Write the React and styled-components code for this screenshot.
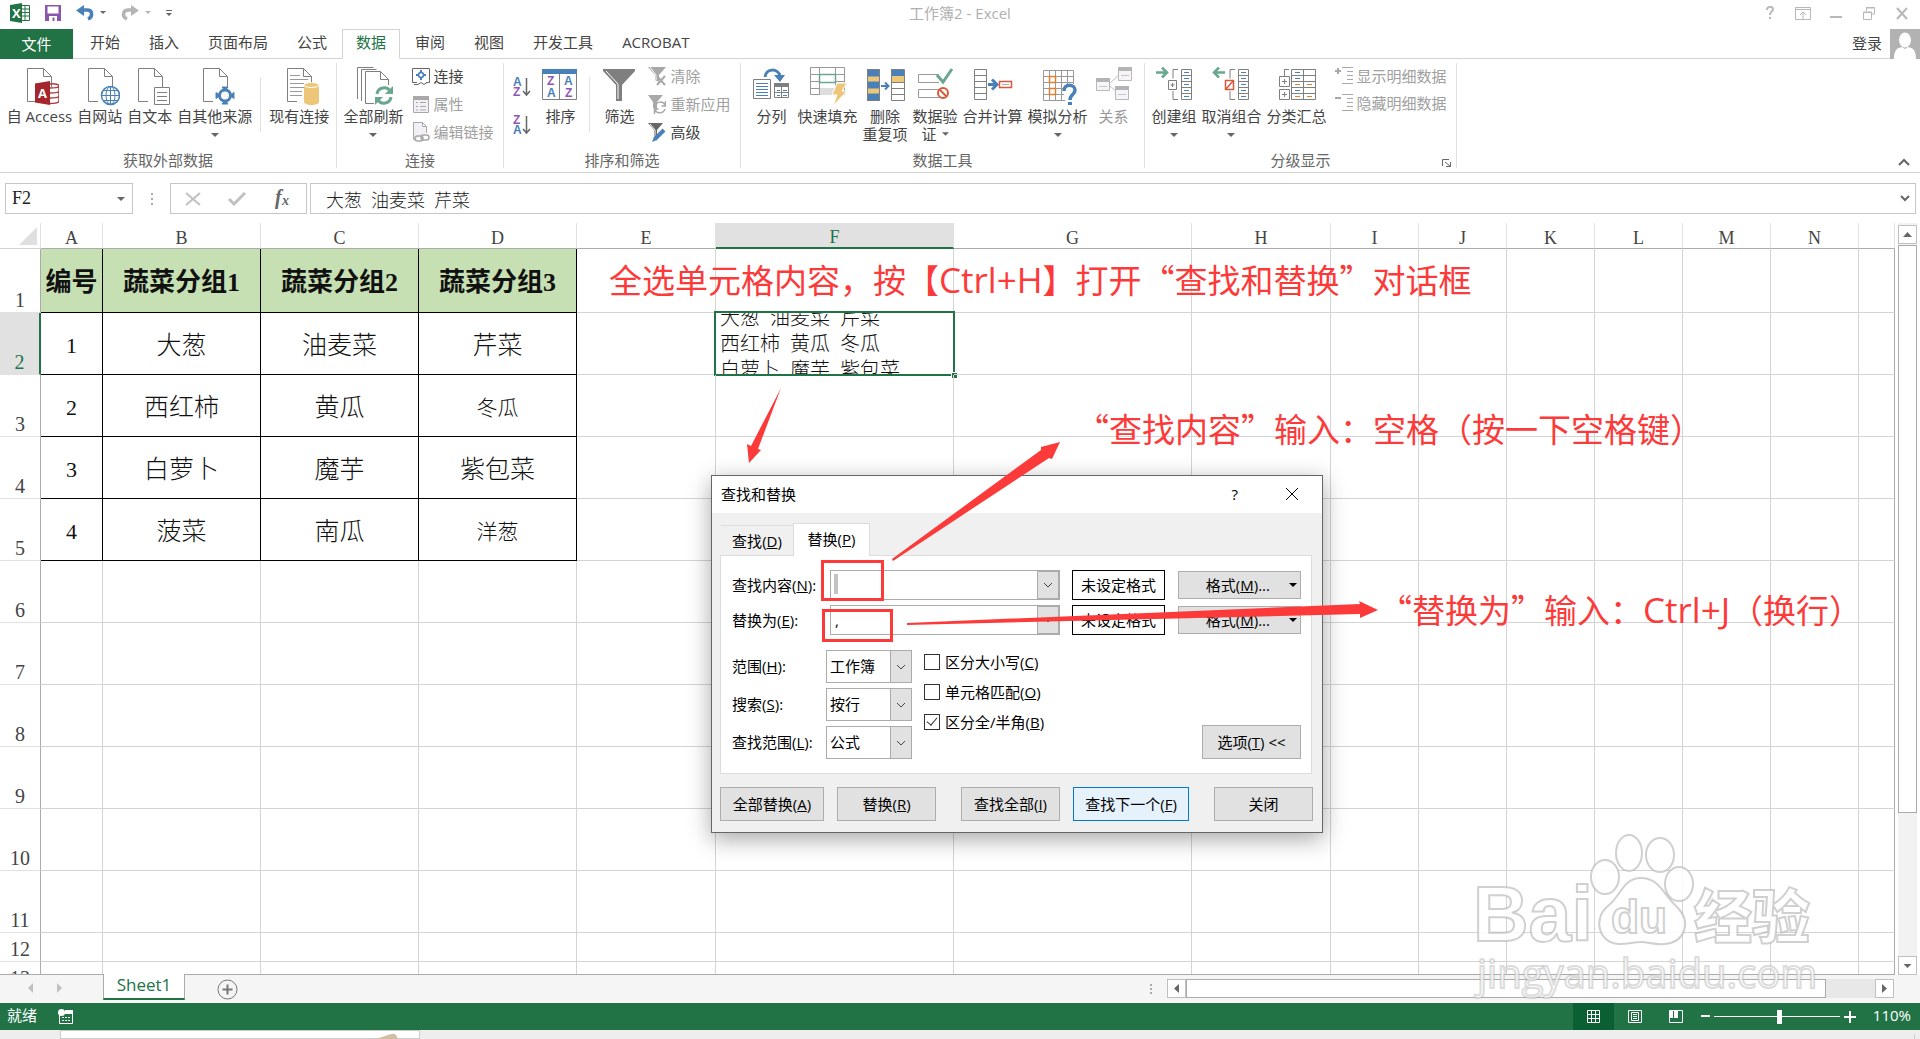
import React from 'react';
import styled, { createGlobalStyle, css } from 'styled-components';

const sans = '"Open Sans", "Noto Sans CJK SC", sans-serif';
const cjk = '"Noto Sans CJK SC", sans-serif';
const serif = '"Liberation Serif", "Noto Sans CJK SC", serif';

const GlobalStyle = createGlobalStyle`
  * {
    box-sizing: border-box;
  }
  body {
    margin: 0;
    overflow: hidden;
    background: white;
    color: #444;
    font: 15px/18px ${sans};
  }
  button, input, select {
    font: inherit;
    color: inherit;
    border-radius: 0;
  }
  button {
    padding: 0;
    border: none;
    background: none;
    white-space: nowrap;
  }
  svg {
    display: block;
    flex: none;
  }
`;

const StyledApp = styled.div`
  position: relative;
  height: 100vh;
  display: flex;
  flex-direction: column;
  overflow: hidden;
`;

const StyledTitleBar = styled.header`
  height: 29px;
  flex: none;
  display: grid;
  grid-template-columns: 1fr auto 1fr;
  align-items: center;
  padding: 0 10px 3px 10px;
  color: #b0b0b0;
`;

const StyledTitle = styled.h1`
  margin: 0;
  font-size: 15px;
  font-weight: 400;
`;

const StyledQuickBar = styled.div`
  display: flex;
  align-items: center;
  gap: 15px;
`;

const StyledWindowButtons = styled.div`
  display: flex;
  justify-content: flex-end;
  gap: 17px;
`;

const StyledTabRow = styled.nav`
  height: 30px;
  flex: none;
  display: flex;
  gap: 1px;
  border-bottom: 1px solid #d4d4d4;
`;

const StyledFileTab = styled.button`
  width: 73px;
  height: 30px;
  margin-right: 2px;
  background: #217346;
  color: white;
`;

const StyledTab = styled.button`
  height: 30px;
  padding: 0 13px 5px;
  border: 1px solid transparent;
  ${({ active }) =>
    active &&
    css`
      background: white;
      border-color: #d4d4d4;
      border-bottom-color: white;
      color: #217346;
    `}
`;

const StyledAccount = styled.div`
  margin-left: auto;
  display: flex;
  align-items: center;
  gap: 8px;
  height: 30px;
`;

const StyledLogin = styled.a`
  padding-bottom: 3px;
  color: inherit;
  text-decoration: none;
`;

const StyledRibbon = styled.section`
  position: relative;
  height: 114px;
  flex: none;
  display: flex;
  padding: 4px 0;
  border-bottom: 1px solid #d4d4d4;
`;

const StyledGroup = styled.div`
  position: relative;
  width: ${({ width }) => width}px;
  height: 105px;
  flex: none;
  border-right: 1px solid #e1e1e1;
`;

const StyledTools = styled.div`
  display: flex;
  justify-content: center;
  gap: 1px;
  height: 88px;
`;

const StyledGroupName = styled.div`
  text-align: center;
  color: #666;
`;

const StyledBigButton = styled.button`
  display: flex;
  flex-direction: column;
  align-items: center;
  min-width: 46px;
  padding: 4px 2px 0;
  opacity: ${({ disabled }) => (disabled ? 0.55 : 1)};
  white-space: pre;
  color: #444;
`;

const StyledSecondLine = styled.span`
  display: flex;
  align-items: center;
  gap: 5px;
`;

const StyledDivider = styled.div`
  width: 1px;
  height: 55px;
  margin: 14px ${({ gap }) => gap}px 0;
  background: #e1e1e1;
`;

const StyledColumn = styled.div`
  display: flex;
  flex-direction: column;
`;

const StyledSmallButton = styled.button`
  display: flex;
  align-items: center;
  gap: 4px;
  height: ${({ $row }) => $row || 28}px;
  padding: 0 5px 2px;
  color: ${({ disabled }) => (disabled ? '#a0a0a0' : '#444')};
`;

const StyledSortButtons = styled.div`
  display: flex;
  flex-direction: column;
  gap: 16px;
  padding: 13px 5px 0;
`;

const StyledLauncher = styled.button`
  position: absolute;
  right: 5px;
  bottom: 1px;
`;

const StyledCollapse = styled.button`
  position: absolute;
  right: 10px;
  bottom: 6px;
`;

const StyledFormulaBar = styled.section`
  height: 50px;
  flex: none;
  display: flex;
  gap: 3px;
  padding: 10px 4px 9px 5px;
`;

const StyledNameBox = styled.div`
  width: 128px;
  display: flex;
  align-items: center;
  border: 1px solid #c6c6c6;
  padding: 0 7px 0 6px;
`;

const StyledBareInput = styled.input`
  flex: 1;
  min-width: 0;
  padding: 0;
  border: none;
  outline: none;
  background: none;
  color: ${({ color }) => color || '#222'};
  font-family: ${({ serifed }) => (serifed ? serif : sans)};
  font-size: ${({ serifed }) => (serifed ? 18 : 15)}px;
  font-weight: ${({ serifed }) => (serifed ? 300 : 400)};
`;

const StyledGrip = styled.div`
  width: 31px;
  display: flex;
  justify-content: center;
  align-items: center;
`;

const StyledFormulaTools = styled.div`
  width: 137px;
  display: flex;
  align-items: center;
  justify-content: space-between;
  padding: 0 16px 0 14px;
  border: 1px solid #c6c6c6;
`;

const StyledFormulaInput = styled.div`
  flex: 1;
  display: flex;
  align-items: center;
  padding: 0 5px 0 15px;
  border: 1px solid #c6c6c6;
`;

const StyledWorkspace = styled.main`
  flex: 1;
  min-height: 0;
  display: flex;
`;

const StyledSheet = styled.div`
  flex: 1;
  min-width: 0;
  overflow: hidden;
  border-bottom: 1px solid #ababab;
`;

const StyledTable = styled.table`
  width: 100%;
  table-layout: fixed;
  border-collapse: separate;
  border-spacing: 0;
  font-family: ${serif};
`;

const StyledColumnHead = styled.th`
  height: 26px;
  padding: 4px 0 0;
  border-right: 1px solid #e1e1e1;
  border-bottom: 1px solid #ababab;
  font-size: 18px;
  line-height: 20px;
  font-weight: 400;
  ${({ $selected }) =>
    $selected &&
    css`
      background: #e1e1e1;
      padding-top: 3px;
      border-bottom: 2px solid #217346;
      color: #217346;
    `}
`;

const StyledCorner = styled.td`
  height: 26px;
  padding: 0 3px 3px;
  border-right: 1px solid #e1e1e1;
  border-bottom: 1px solid #d4d4d4;
  vertical-align: bottom;
  svg {
    margin-left: auto;
  }
`;

const StyledRowHead = styled.th`
  height: ${({ $height }) => $height}px;
  padding: 0 0 2px;
  border-right: 1px solid #ababab;
  border-bottom: 1px solid #e1e1e1;
  vertical-align: bottom;
  font-size: 20px;
  line-height: 20px;
  font-weight: 400;
  ${({ $selected }) =>
    $selected &&
    css`
      background: #e1e1e1;
      border-right: 2px solid #217346;
      color: #217346;
    `}
`;

const StyledCell = styled.td`
  position: relative;
  padding: 4px 0 0;
  border-right: 1px solid #d4d4d4;
  border-bottom: 1px solid #d4d4d4;
  text-align: center;
  color: #111;
  font-size: ${({ $size }) => $size || 25}px;
  font-weight: 300;
  line-height: 26px;
  white-space: nowrap;
  &:last-child {
    border-right-color: #ababab;
  }
  ${({ $data }) =>
    $data &&
    css`
      border-color: black;
    `}
  ${({ $head }) =>
    $head &&
    css`
      background: #c6e0b4;
      font-weight: 700;
    `}
`;

const StyledSelection = styled.div`
  position: absolute;
  inset: -2px;
  border: 2px solid #217346;
  display: flex;
  flex-direction: column;
  justify-content: center;
  overflow: hidden;
  padding-left: 4px;
  font-size: 20px;
  text-align: left;
  white-space: pre;
`;

const StyledFillHandle = styled.span`
  position: absolute;
  right: -4px;
  bottom: -4px;
  width: 6px;
  height: 6px;
  border: solid white;
  border-width: 1px 0 0 1px;
  background: #217346;
`;

const StyledVerticalScroll = styled.div`
  width: 25px;
  display: flex;
  flex-direction: column;
  padding: 2px 3px 0;
  background: linear-gradient(#f2f2f2, #f2f2f2) 3px 0 / 19px 100% no-repeat;
`;

const StyledScrollButton = styled.button`
  width: 19px;
  height: 19px;
  flex: none;
  display: flex;
  align-items: center;
  justify-content: center;
  border: 1px solid #c0c0c0;
  background: white;
`;

const StyledVerticalThumb = styled.div`
  flex: 568 0 0;
  margin-top: 1px;
  border: 1px solid #ababab;
  background: white;
`;

const StyledSpace = styled.div`
  flex: ${({ grow }) => grow} 0 0;
`;

const StyledSheetBar = styled.section`
  height: 28px;
  flex: none;
  display: flex;
  align-items: flex-start;
  background: #f5f5f5;
`;

const StyledSheetArrows = styled.div`
  width: 103px;
  display: flex;
  gap: 24px;
  padding: 8px 0 0 28px;
`;

const StyledSheetTab = styled.button`
  width: 82px;
  height: 26px;
  margin-top: -1px;
  padding-bottom: 3px;
  z-index: 1;
  border: 1px solid #ababab;
  border-top: none;
  border-bottom: 2px solid #217346;
  background: white;
  color: #217346;
  font-size: 17px;
`;

const StyledAddSheet = styled.button`
  margin: 4px 0 0 32px;
`;

const StyledHorizontalScroll = styled.div`
  width: 744px;
  display: flex;
  align-items: center;
  margin: 4px 26px 0 auto;
`;

const StyledTrack = styled.div`
  flex: 1;
  display: flex;
  height: 19px;
  background: #e8e8e8;
`;

const StyledHorizontalThumb = styled.div`
  width: 640px;
  border: 1px solid #ababab;
  background: white;
`;

const StyledStatusBar = styled.footer`
  height: 27px;
  flex: none;
  display: flex;
  align-items: center;
  padding: 0 9px 0 7px;
  background: #217346;
  color: white;
`;

const StyledStatusText = styled.span`
  padding-bottom: 3px;
`;

const StyledViewButton = styled.button`
  width: 41px;
  height: 27px;
  display: flex;
  align-items: center;
  justify-content: center;
  background: ${({ active }) => (active ? '#0b6033' : 'none')};
`;

const StyledStatusIcon = styled.div`
  margin: 0 auto 0 21px;
`;

const StyledZoomRange = styled.input`
  appearance: none;
  width: 126px;
  height: 14px;
  margin: 0 4px;
  background: linear-gradient(white, white) center / 100% 1px no-repeat;
  &::-webkit-slider-thumb {
    appearance: none;
    width: 5px;
    height: 14px;
    background: white;
  }
`;

const StyledZoomValue = styled.span`
  margin-left: 14px;
  padding-bottom: 3px;
  width: 41px;
  text-align: right;
`;

const StyledTaskbar = styled.div`
  height: 9px;
  flex: none;
  display: flex;
  justify-content: space-between;
  overflow: hidden;
  background: #eee;
`;

const StyledTaskSearch = styled.div`
  width: 360px;
  margin-left: 60px;
  border: 1px solid #ccc;
  background: white;
  svg {
    margin: 2px 0 0 312px;
  }
`;

const StyledClock = styled.div`
  margin: 4px 5px 0 0;
  padding-right: 89px;
  border-right: 1px solid #ccc;
  color: black;
`;

const StyledDialog = styled.section`
  position: absolute;
  left: 711px;
  top: 475px;
  width: 612px;
  border: 1px solid #666;
  background: #f0f0f0;
  box-shadow: 0 6px 22px rgba(0, 0, 0, 0.35);
  color: black;
`;

const StyledDialogTitle = styled.div`
  height: 37px;
  display: flex;
  align-items: center;
  padding: 0 23px 2px 9px;
  background: white;
  h2 {
    margin: 0 auto 0 0;
    font-size: 15px;
    font-weight: 400;
  }
  button + button {
    margin-left: 47px;
  }
`;

const StyledDialogBody = styled.div`
  padding: 10px 8px 11px;
`;

const StyledDialogTabs = styled.div`
  display: flex;
  align-items: flex-end;
  padding-left: 1px;
`;

const StyledDialogTab = styled.button`
  position: relative;
  width: ${({ active }) => (active ? 77 : 72)}px;
  height: ${({ active }) => (active ? 33 : 30)}px;
  border-top: 1px solid #dcdcdc;
  ${({ active }) =>
    active &&
    css`
      margin-bottom: -1px;
      padding-bottom: 2px;
      border: 1px solid #dcdcdc;
      border-bottom: none;
      background: white;
    `}
`;

const StyledPanel = styled.div`
  display: flex;
  flex-direction: column;
  gap: 5px;
  margin-right: 2px;
  padding: 14px 10px 14px 11px;
  border: 1px solid #dcdcdc;
  background: white;
`;

const StyledFindRow = styled.div`
  display: flex;
  align-items: center;
  label {
    width: 98px;
    white-space: nowrap;
  }
`;

const StyledCombo = styled.div`
  flex: 1;
  height: 30px;
  display: flex;
  padding-left: 4px;
  border: 1px solid #ababab;
`;

const StyledDropButton = styled.button`
  width: 22px;
  display: flex;
  align-items: center;
  justify-content: center;
  border: 1px solid #ababab;
  background: #e1e1e1;
`;

const StyledFormatPreview = styled.div`
  width: 93px;
  height: 30px;
  margin: 0 13px 0 12px;
  border: 1px solid black;
  line-height: 28px;
  text-align: center;
`;

const StyledButton = styled.button`
  width: ${({ width }) => width || 99}px;
  height: ${({ height }) => height || 34}px;
  border: 1px solid ${({ primary }) => (primary ? '#0078d7' : '#adadad')};
  background: ${({ primary }) => (primary ? '#e5f1fb' : '#e1e1e1')};
`;

const StyledFormatButton = styled(StyledButton)`
  display: flex;
  align-items: center;
  justify-content: flex-end;
  gap: 19px;
  padding-right: 3px;
`;

const StyledOptions = styled.div`
  display: flex;
  align-items: flex-start;
  gap: 12px;
  margin-top: 10px;
`;

const StyledSelectRow = styled.div`
  display: flex;
  align-items: center;
  margin-bottom: 5px;
  &:last-child {
    margin-bottom: 0;
  }
  label {
    width: 94px;
    padding-bottom: 2px;
    white-space: nowrap;
  }
`;

const StyledSelectBox = styled.div`
  position: relative;
  display: flex;
`;

const StyledSelect = styled.select`
  appearance: none;
  width: 86px;
  height: 33px;
  padding: 0 22px 2px 3px;
  border: 1px solid #ababab;
  background: white;
`;

const StyledSelectArrow = styled.span`
  position: absolute;
  right: 0;
  top: 0;
  bottom: 0;
  width: 22px;
  display: flex;
  align-items: center;
  justify-content: center;
  border: 1px solid #ababab;
  background: #e1e1e1;
  pointer-events: none;
`;

const StyledCheckList = styled.div`
  display: flex;
  flex-direction: column;
  gap: 12px;
  padding-top: 3px;
`;

const StyledCheckLabel = styled.label`
  display: flex;
  align-items: center;
  gap: 5px;
`;

const StyledCheckbox = styled.input`
  appearance: none;
  width: 16px;
  height: 16px;
  margin: 0;
  border: 1px solid #333;
  background: white;
  &:checked::after {
    content: '';
    display: block;
    width: 5px;
    height: 9px;
    margin: 0 0 0 4px;
    border: solid #333;
    border-width: 0 1px 1px 0;
    transform: rotate(40deg);
  }
`;

const StyledMore = styled.div`
  margin-left: auto;
  align-self: flex-end;
`;

const StyledDialogFooter = styled.div`
  display: flex;
  gap: 25px;
  margin-top: 13px;
  div {
    display: flex;
    gap: 13px;
  }
`;

const StyledCaret = styled.span`
  width: 4px;
  height: 20px;
  margin: 3px 0 0 -1px;
  background: #c4c4c4;
`;

const StyledNotes = styled.div`
  position: absolute;
  inset: 0;
  pointer-events: none;
  color: #fc3a3a;
`;

const StyledNote = styled.p`
  position: absolute;
  left: ${({ $left }) => $left}px;
  top: ${({ $top }) => $top}px;
  margin: 0;
  font: 33px/50px ${cjk};
  white-space: nowrap;
  span {
    font-family: 'Open Sans', sans-serif;
    font-size: 35px;
  }
`;

const StyledWatermark = styled.svg`
  position: absolute;
  right: 90px;
  bottom: 29px;
`;

const blue = '#4a80b8';
const grey = '#7f7f7f';
const green = '#6aa78f';
const yellow = '#eec67a';
const red = '#d9593d';

const Big = ({ children }) => (
  <svg width="40" height="40" viewBox="0 0 40 40" fill="none" stroke={grey}>
    {children}
  </svg>
);

const Small = ({ children }) => (
  <svg width="18" height="20" viewBox="0 0 18 20" fill="none" stroke="#a8a8a8">
    {children}
  </svg>
);

const Arrow = ({ color = '#666', size = 7 }) => (
  <svg width={size} height="4" viewBox="0 0 8 4">
    <path d="M0 0h8L4 4z" fill={color} />
  </svg>
);

const Chevron = () => (
  <svg width="10" height="6" viewBox="0 0 10 6" fill="none" stroke="#444">
    <path d="M1 1l4 4 4-4" />
  </svg>
);

const Page = () => <path d="M18 34.5H8.5v-33h16l8 8V20M24.5 1.5v8h8" />;

const icons = {
  access: (
    <Big>
      <Page />
      <path d="M16 16.5L31 14v24l-15-2.500z" fill="#a4262c" stroke="none" />
      <g stroke="#b5383c" strokeWidth="1.500">
        <path d="M31 17c6-.5 9 .5 9 2s-4 2-9 2M40 19v15c0 2-4 2.500-9 2.500M31 26c5 0 9-.5 9-2M31 31c5 0 9-.5 9-2" />
      </g>
      <text x="19" y="31" fontSize="13" fontWeight="700" fill="white" stroke="none">A</text>
    </Big>
  ),
  web: (
    <Big>
      <Page />
      <circle cx="30.500" cy="28.500" r="9" fill="white" stroke={blue} strokeWidth="1.500" />
      <path d="M21.500 28.500h18M30.500 19.500v18M23 23.500h15M23 33.500h15" stroke={blue} />
      <ellipse cx="30.500" cy="28.500" rx="4.500" ry="9" stroke={blue} />
    </Big>
  ),
  text: (
    <Big>
      <Page />
      <path d="M24.500 20.500h15v17h-15z" fill="white" />
      <path d="M27 25.500h10M27 29.500h10M27 33.500h10" />
    </Big>
  ),
  other: (
    <Big>
      <Page />
      <circle cx="30" cy="28.500" r="5.500" fill="white" stroke={blue} strokeWidth="3" />
      <path d="M27 20h6l-3 4zM27 37h6l-3-4zM21 25.500v6l4-3zM39 25.500v6l-4-3z" fill={blue} stroke={blue} />
    </Big>
  ),
  existing: (
    <Big>
      <Page />
      <path d="M11 8.500h10M11 12.500h18M11 16.500h14M11 20.500h14M11 24.500h12M11 28.500h12" stroke="#999" />
      <path d="M25 18v17c0 4 15 4 15 0V18z" fill={yellow} stroke="none" />
      <ellipse cx="32.500" cy="18" rx="7.500" ry="2.500" fill={yellow} stroke="white" />
    </Big>
  ),
  refresh: (
    <Big>
      <path d="M4.500 32V.5h16M8.500 34V2.500h15M21 36.500h-8.500v-32h15l8 8V18M27.500 4.500v8h8" />
      <g stroke={green} strokeWidth="3">
        <path d="M24 27c1-7 10-8 13-3M38 30c-1 7-10 8-13 3" />
      </g>
      <path d="M40 19v8h-8zM22 38v-8h8z" fill={green} stroke="none" />
    </Big>
  ),
  sort: (
    <Big>
      <path d="M2.500 2.500h34v30h-34zM19.500 6v26" />
      <path d="M2 2h35v5H2z" fill={blue} stroke="none" />
      <g fontSize="12" fontWeight="600" stroke="none" fontFamily="Liberation Sans">
        <text x="7" y="18" fill="#9055b5">Z</text>
        <text x="7" y="30" fill={blue}>A</text>
        <text x="24" y="18" fill={blue}>A</text>
        <text x="25" y="30" fill="#9055b5">Z</text>
      </g>
    </Big>
  ),
  filter: (
    <Big>
      <path d="M4 2h32v2L23 18v16h-6V18L4 4z" fill={grey} stroke="none" />
      <path d="M7 4l12 13v15" stroke="white" />
    </Big>
  ),
  split: (
    <Big>
      <path d="M2.500 12.500h17v19h-17zM23.500 16.500h14v14h-14zM30.500 20v11M24 25.500h13" />
      <path d="M23 16h15v4H23z" fill={grey} stroke="none" />
      <path d="M5 16.500h12M5 19.500h12M5 22.500h12M5 25.500h12M5 28.500h12M26 23.500h3M32 23.500h4M26 28.500h3M32 28.500h4" stroke={blue} />
      <path d="M14 10c1-9 13-9 15-1" stroke={blue} strokeWidth="3" />
      <path d="M23 8h11l-5 7z" fill={blue} stroke="none" />
    </Big>
  ),
  flash: (
    <Big>
      <path d="M3.500.5h34v27h-34zM3.500 7.500h34M3.500 14.500h34M3.500 21.500h34M12.500.5v27M28.500.5v27" stroke="#999" />
      <path d="M13 21h15v7H13z" fill="#ddd" stroke="none" />
      <path d="M12.500 7.500h16v8h-16z" fill="white" stroke={green} strokeWidth="1.500" />
      <path d="M30 16h10l-5 8h5L26 39l4-11h-5z" fill={yellow} stroke="white" />
    </Big>
  ),
  duplicates: (
    <Big>
      <path d="M2 2h13v32H2z" fill={blue} stroke="none" />
      <path d="M3 9.500h11v5H3zM3 21.500h11v5H3z" fill={yellow} stroke="none" />
      <path d="M2.500 2.500h12v31h-12z" />
      <path d="M26 2h13v7H26z" fill={blue} stroke="none" />
      <path d="M26 9h13v6H26z" fill={yellow} stroke="none" />
      <path d="M26.500 2.500h13v31h-13zM26.500 15.500h13M26.500 21.500h13M26.500 27.500h13" />
      <path d="M16 19h7M20 15.500l3.500 3.500-3.500 3.500" stroke={blue} strokeWidth="2" />
    </Big>
  ),
  validate: (
    <Big>
      <path d="M24 15.500H3.500v-8H24M24 30.500H3.500v-8H24" stroke="#999" />
      <path d="M22 8l6 7L37 2" stroke={green} strokeWidth="3" />
      <circle cx="28" cy="26" r="5" stroke={red} strokeWidth="2" fill="white" />
      <path d="M24.500 22.500l7 7" stroke={red} strokeWidth="2" />
    </Big>
  ),
  merge: (
    <Big>
      <path d="M1.500 2.500h12v30h-12zM1.500 8.500h12M1.500 14.500h12M1.500 20.500h12M1.500 26.500h12" />
      <path d="M15 17.500h8M19 12.500l5 5-5 5" stroke={blue} strokeWidth="3" />
      <path d="M26.500 14.500h12v6h-12z" stroke={red} strokeWidth="1.500" />
      <path d="M29 17.500h7" stroke="#aaa" />
    </Big>
  ),
  whatif: (
    <Big>
      <path d="M5.500 3.500h30v30h-30zM11.500 4v29M17.500 4v29M23.500 4v29M29.500 4v29M6 9.500h29M6 15.500h29M6 21.500h29M6 27.500h29" stroke="#999" />
      <path d="M11.500 9.500h6v6h-6zM11.500 21.500h6v6h-6z" fill="white" stroke="#e08030" strokeWidth="1.500" />
      <path d="M24 17h14v20H28z" fill="white" stroke="none" />
      <path d="M26 24c0-8 11-7 11-1 0 5-5 4-5 10" stroke={blue} strokeWidth="3.500" />
      <path d="M30 35h4v3h-4z" fill={blue} stroke="none" />
    </Big>
  ),
  relations: (
    <Big>
      <path d="M15 17l12-11M15 18l9 8" stroke="#888" />
      <path d="M2.500 11.500h13v12h-13zM24.500 .5h13v13h-13zM21.500 20.500h13v12h-13z" fill="#f0ecf4" />
      <path d="M2 11h14v4H2zM24 0h14v4H24zM21 19h14v4H21z" fill="#777" stroke="none" />
      <path d="M5 19.500h8M27 8.500h8M24 27.500h8" stroke="#999" />
    </Big>
  ),
  group: (
    <Big>
      <path d="M27.500 2.500h10v30h-10zM27.500 8.500h10M27.500 14.500h10M27.500 20.500h10M27.500 26.500h10M24 2.500h-5v9M19 24v8.500h5M14.500 13.500h8v9h-8zM16.500 18h4M18.500 16v4" />
      <path d="M30 5.500h5M30 11.500h5M30 17.500h5M30 23.500h5M30 29.500h5" stroke={blue} />
      <path d="M2 5.500h10M8 .5l5 5-5 5" stroke={green} strokeWidth="2.500" />
    </Big>
  ),
  ungroup: (
    <Big>
      <path d="M27.500 2.500h10v30h-10zM27.500 8.500h10M27.500 14.500h10M27.500 20.500h10M27.500 26.500h10M24 2.500h-5v9M19 24v8.500h5" />
      <path d="M30 5.500h5M30 11.500h5M30 17.500h5M30 23.500h5M30 29.500h5" stroke={blue} />
      <path d="M14.500 13.500h8v9h-8zM15 22l7-8" stroke={red} strokeWidth="1.500" />
      <path d="M4 5.500h10M8 .5l-5 5 5 5" stroke={green} strokeWidth="2.500" />
    </Big>
  ),
  subtotal: (
    <Big>
      <path d="M14.500 2.500h24v30h-24zM14.500 8.500h24M14.500 14.500h24M14.500 20.500h24M14.500 26.500h24M26.500 3v29M12 2.500H7.500v7" />
      <path d="M2.500 9.500h10v10h-10zM2.500 22.500h10v10h-10zM5 14.500h5M7.500 12v5M5 27.500h5M7.500 25v5" />
      <path d="M18 5.500h5M18 11.500h5M18 23.500h5" stroke={blue} />
      <path d="M18 17.500h5M30 17.500h5M18 29.500h5M30 29.500h5" stroke="#e08030" />
    </Big>
  ),
  connection: (
    <Small>
      <path d="M5 16.500H.5v-14h17v14H14M2 18.500h4l3-2 3 2 3-2" stroke="#666" />
      <circle cx="9" cy="9" r="2.500" stroke={blue} strokeWidth="1.500" />
      <path d="M9 4v2M9 12v2M4 9h2M12 9h2" stroke={blue} strokeWidth="2" />
    </Small>
  ),
  properties: (
    <Small>
      <path d="M1.500 2.500h15v16h-15zM8 8.500h6M8 12.500h6M8 16h6M4 8.500h2M4 12.500h2M4 16h2" fill="#f3f0f5" />
      <path d="M1 2h16v4H1z" fill="#a8a8a8" stroke="none" />
    </Small>
  ),
  editLinks: (
    <Small>
      <path d="M4 17.500H1.500v-17h9l4 4V11M10.500.5v4h4" fill="#f3f0f5" />
      <rect x="3" y="14" width="8" height="5" rx="2.500" strokeWidth="1.500" />
      <rect x="9" y="13" width="8" height="5" rx="2.500" strokeWidth="1.500" />
    </Small>
  ),
  clear: (
    <Small>
      <path d="M0 1h18l-7 8v7l-4-2V9z" fill="#a8a8a8" stroke="none" />
      <path d="M2 1l6 8v5" stroke="white" />
      <path d="M9 10l8 9M17 10l-8 9" strokeWidth="2" />
    </Small>
  ),
  reapply: (
    <Small>
      <path d="M0 1h15l-6 7v8l-4-2V8z" fill="#a8a8a8" stroke="none" />
      <path d="M7 12c2-5 8-5 10-1M17 15c-2 5-8 5-10 1M17.500 7v5h-4M6.500 20v-5h4" strokeWidth="1.500" />
    </Small>
  ),
  advanced: (
    <Small>
      <path d="M0 1h15L9 8v8l-3-2V8z" fill="#666" stroke="none" />
      <path d="M2 2l5 6v6" stroke="white" />
      <path d="M7 17L16 8" stroke={blue} strokeWidth="4" />
      <path d="M4 20l2-5 3 3z" fill={blue} stroke="none" />
    </Small>
  ),
  showDetail: (
    <Small>
      <path d="M0 5h6M3 2v6" strokeWidth="2" />
      <path d="M7 1.500h11M12 5.500h6M12 9.500h6M12 13.500h6M7 17.500h11" />
    </Small>
  ),
  hideDetail: (
    <Small>
      <path d="M0 5h6" strokeWidth="2" />
      <path d="M7 1.500h11M12 5.500h6M12 9.500h6M12 13.500h6M7 17.500h11" />
    </Small>
  ),
};

const SortIcon = ({ top, bottom }) => (
  <svg width="18" height="22" viewBox="0 0 18 22">
    <g fontSize="12" fontWeight="700" fontFamily="Liberation Sans">
      <text x="0" y="10" fill={top === 'A' ? blue : '#9055b5'}>{top}</text>
      <text x="0" y="20" fill={bottom === 'A' ? blue : '#9055b5'}>{bottom}</text>
    </g>
    <path d="M13.500 2v17M10 15l3.500 4 3.500-4" fill="none" stroke="#666" strokeWidth="1.500" />
  </svg>
);

const BigButton = ({ icon, label, second, drop, disabled }) => (
  <StyledBigButton type="button" disabled={disabled}>
    {icons[icon]}
    <span>{label}</span>
    {second && (
      <StyledSecondLine>
        {second}
        {drop && <Arrow />}
      </StyledSecondLine>
    )}
    {drop && !second && (
      <svg width="8" height="18" viewBox="0 0 8 18">
        <path d="M0 8h8l-4 4z" fill="#666" />
      </svg>
    )}
  </StyledBigButton>
);

const SmallButton = ({ icon, label, disabled, row }) => (
  <StyledSmallButton type="button" disabled={disabled} $row={row}>
    {icons[icon]}
    {label}
  </StyledSmallButton>
);

const Ribbon = () => (
  <StyledRibbon>
    <StyledGroup width={337}>
      <StyledTools>
        <BigButton icon="access" label="自 Access" />
        <BigButton icon="web" label="自网站" />
        <BigButton icon="text" label="自文本" />
        <BigButton icon="other" label="自其他来源" drop />
        <StyledDivider gap={5} />
        <BigButton icon="existing" label="现有连接" />
      </StyledTools>
      <StyledGroupName>获取外部数据</StyledGroupName>
    </StyledGroup>
    <StyledGroup width={167}>
      <StyledTools>
        <BigButton icon="refresh" label="全部刷新" drop />
        <StyledColumn>
          <SmallButton icon="connection" label="连接" />
          <SmallButton icon="properties" label="属性" disabled />
          <SmallButton icon="editLinks" label="编辑链接" disabled />
        </StyledColumn>
      </StyledTools>
      <StyledGroupName>连接</StyledGroupName>
    </StyledGroup>
    <StyledGroup width={237}>
      <StyledTools>
        <StyledSortButtons>
          <button type="button" aria-label="升序">
            <SortIcon top="A" bottom="Z" />
          </button>
          <button type="button" aria-label="降序">
            <SortIcon top="Z" bottom="A" />
          </button>
        </StyledSortButtons>
        <BigButton icon="sort" label="排序" />
        <StyledDivider gap={5} />
        <BigButton icon="filter" label="筛选" />
        <StyledColumn>
          <SmallButton icon="clear" label="清除" disabled />
          <SmallButton icon="reapply" label="重新应用" disabled />
          <SmallButton icon="advanced" label="高级" />
        </StyledColumn>
      </StyledTools>
      <StyledGroupName>排序和筛选</StyledGroupName>
    </StyledGroup>
    <StyledGroup width={404}>
      <StyledTools>
        <BigButton icon="split" label="分列" />
        <BigButton icon="flash" label="快速填充" />
        <BigButton icon="duplicates" label="删除" second="重复项" />
        <BigButton icon="validate" label="数据验" second="证" drop />
        <BigButton icon="merge" label="合并计算" />
        <BigButton icon="whatif" label="模拟分析" drop />
        <BigButton icon="relations" label="关系" disabled />
      </StyledTools>
      <StyledGroupName>数据工具</StyledGroupName>
    </StyledGroup>
    <StyledGroup width={312}>
      <StyledTools>
        <BigButton icon="group" label="创建组" drop />
        <BigButton icon="ungroup" label="取消组合" drop />
        <BigButton icon="subtotal" label="分类汇总" />
        <StyledColumn>
          <SmallButton icon="showDetail" label="显示明细数据" row={27} disabled />
          <SmallButton icon="hideDetail" label="隐藏明细数据" row={27} disabled />
        </StyledColumn>
      </StyledTools>
      <StyledGroupName>分级显示</StyledGroupName>
      <StyledLauncher type="button" aria-label="分级显示设置">
        <svg width="9" height="8" viewBox="0 0 9 8" fill="none" stroke="#666">
          <path d="M.5 7V.5H7M3 3l5 4M8.500 3v4.500H4" />
        </svg>
      </StyledLauncher>
    </StyledGroup>
    <StyledCollapse type="button" aria-label="折叠功能区">
      <svg width="12" height="8" viewBox="0 0 12 8" fill="none" stroke="#666" strokeWidth="2">
        <path d="M1 7l5-5 5 5" />
      </svg>
    </StyledCollapse>
  </StyledRibbon>
);

const tabs = ['开始', '插入', '页面布局', '公式', '数据', '审阅', '视图', '开发工具', 'ACROBAT'];

const TitleBar = () => (
  <StyledTitleBar>
    <StyledQuickBar>
      <svg width="20" height="20" viewBox="0 0 20 20">
        <path d="M11 2.500h8.500v15H11M11 6h8M11 9.500h8M11 13h8M15 3v14" fill="none" stroke="#217346" />
        <path d="M0 2l12-2v20L0 18z" fill="#217346" />
        <text x="2" y="15" fontSize="13" fontWeight="700" fill="white">X</text>
      </svg>
      <button type="button" aria-label="保存">
        <svg width="16" height="16" viewBox="0 0 16 16">
          <path d="M0 0h16v16H0z" fill="#8a55ad" />
          <path d="M2.500 1.500h11v7h-11zM4 11h8v5H9.500v-3.500h-2V16H4z" fill="white" />
        </svg>
      </button>
      <button type="button" aria-label="撤消">
        <svg width="30" height="16" viewBox="0 0 30 16">
          <path d="M4 5h7c6 0 6 7 1 9" fill="none" stroke="#4a80b8" strokeWidth="3.500" />
          <path d="M8 0v11L0 5.500z" fill="#4a80b8" />
          <path d="M24 6h6l-3 3z" fill="#666" />
        </svg>
      </button>
      <button type="button" aria-label="恢复">
        <svg width="30" height="16" viewBox="0 0 30 16">
          <path d="M14 5H8c-7 0-7 7-2 9" fill="none" stroke="#b5b5b5" strokeWidth="3.500" />
          <path d="M10 0v11l8-5.500z" fill="#b5b5b5" />
          <path d="M24 6h6l-3 3z" fill="#b5b5b5" />
        </svg>
      </button>
      <button type="button" aria-label="自定义快速访问工具栏">
        <svg width="6" height="8" viewBox="0 0 6 8">
          <path d="M0 1h6v1H0zM0 4h6L3 7z" fill="#666" />
        </svg>
      </button>
    </StyledQuickBar>
    <StyledTitle>工作簿2 - Excel</StyledTitle>
    <StyledWindowButtons>
      <button type="button" aria-label="帮助">
        <svg width="16" height="14" viewBox="0 0 16 14" fill="none" stroke="#b8b8b8" strokeWidth="2">
          <path d="M5 4c0-4 6-4 6-1 0 3-3 2-3 6M8 11v2" />
        </svg>
      </button>
      <button type="button" aria-label="功能区显示选项">
        <svg width="16" height="14" viewBox="0 0 16 14" fill="none" stroke="#b8b8b8">
          <path d="M.5 1.500h15v12H.5zM0 3.500h16M8 13V6M5 9l3-3 3 3" />
        </svg>
      </button>
      <button type="button" aria-label="最小化">
        <svg width="16" height="14" viewBox="0 0 16 14">
          <path d="M2 10h12v2H2z" fill="#b8b8b8" />
        </svg>
      </button>
      <button type="button" aria-label="还原">
        <svg width="16" height="14" viewBox="0 0 16 14" fill="none" stroke="#b8b8b8">
          <path d="M2.500 6.500h8v7h-8zM2 6h9M5.500 5V1.500h8V8H11M5 2h9" />
        </svg>
      </button>
      <button type="button" aria-label="关闭">
        <svg width="16" height="14" viewBox="0 0 16 14" fill="none" stroke="#b8b8b8" strokeWidth="2">
          <path d="M3 2l10 11M13 2L3 13" />
        </svg>
      </button>
    </StyledWindowButtons>
  </StyledTitleBar>
);

const rows = [
  ['编号', '蔬菜分组1', '蔬菜分组2', '蔬菜分组3'],
  ['1', '大葱', '油麦菜', '芹菜'],
  ['2', '西红柿', '黄瓜', '冬瓜'],
  ['3', '白萝卜', '魔芋', '紫包菜'],
  ['4', '菠菜', '南瓜', '洋葱'],
];
const columns = 'ABCDEFGHIJKLMN'.split('');
const widths = [41, 62, 158, 158, 158, 139, 238, 238, 139, 88, 88, 88, 88, 88, 88];

const rowHeight = n => {
  if (n === 1) return 64;
  return n > 11 ? 29 : 62;
};

const cellSize = (row, col, value) => {
  if (row === 0) return 26;
  if (col === 0) return 22;
  return value === '冬瓜' || value === '洋葱' ? 21 : 25;
};

const Sheet = () => (
  <StyledSheet>
    <StyledTable>
      <colgroup>
        {widths.map((w, i) => (
          <col key={i} width={w} />
        ))}
        <col />
      </colgroup>
      <thead>
        <tr>
          <StyledCorner>
            <svg width="18" height="18" viewBox="0 0 18 18">
              <path d="M18 0v18H0z" fill="#dfdfdf" />
            </svg>
          </StyledCorner>
          {columns.map(c => (
            <StyledColumnHead key={c} $selected={c === 'F'}>
              {c}
            </StyledColumnHead>
          ))}
          <StyledColumnHead />
        </tr>
      </thead>
      <tbody>
        {Array.from({ length: 13 }, (_, r) => (
          <tr key={r}>
            <StyledRowHead $height={rowHeight(r + 1)} $selected={r === 1}>
              {r + 1}
            </StyledRowHead>
            {[...columns, ''].map((c, i) => {
              const value = rows[r] && rows[r][i];
              return (
                <StyledCell
                  key={c}
                  $data={Boolean(value)}
                  $head={Boolean(value) && r === 0}
                  $size={cellSize(r, i, value)}
                >
                  {value}
                  {c === 'F' && r === 1 && (
                    <>
                      <StyledSelection>
                        {['大葱 油麦菜 芹菜', '西红柿 黄瓜 冬瓜', '白萝卜 魔芋 紫包菜'].map(t => (
                          <div key={t}>{t.replace(/ /g, '\u2002')}</div>
                        ))}
                      </StyledSelection>
                      <StyledFillHandle />
                    </>
                  )}
                </StyledCell>
              );
            })}
          </tr>
        ))}
      </tbody>
    </StyledTable>
  </StyledSheet>
);

const Keyed = ({ text, letter, end = '' }) => (
  <>
    {text}(<u>{letter}</u>){end}
  </>
);

const FindRow = ({ id, text, letter, value, caret }) => (
  <StyledFindRow>
    <label htmlFor={id}>
      <Keyed text={text} letter={letter} end=":" />
    </label>
    <StyledCombo>
      {caret && <StyledCaret />}
      <StyledBareInput id={id} defaultValue={value} color="black" />
      <StyledDropButton type="button" aria-label={text}>
        <Chevron />
      </StyledDropButton>
    </StyledCombo>
    <StyledFormatPreview>未设定格式</StyledFormatPreview>
    <StyledFormatButton type="button" width={123} height={28}>
      <span>
        <Keyed text="格式" letter="M" end="..." />
      </span>
      <Arrow color="black" size={8} />
    </StyledFormatButton>
  </StyledFindRow>
);

const SelectRow = ({ id, text, letter, value }) => (
  <StyledSelectRow>
    <label htmlFor={id}>
      <Keyed text={text} letter={letter} end=":" />
    </label>
    <StyledSelectBox>
      <StyledSelect id={id}>
        <option>{value}</option>
      </StyledSelect>
      <StyledSelectArrow>
        <Chevron />
      </StyledSelectArrow>
    </StyledSelectBox>
  </StyledSelectRow>
);

const CheckRow = ({ text, letter, checked }) => (
  <StyledCheckLabel>
    <StyledCheckbox type="checkbox" defaultChecked={checked} />
    <span>
      <Keyed text={text} letter={letter} />
    </span>
  </StyledCheckLabel>
);

const FindDialog = () => (
  <StyledDialog role="dialog" aria-label="查找和替换">
    <StyledDialogTitle>
      <h2>查找和替换</h2>
      <button type="button">?</button>
      <button type="button" aria-label="关闭">
        <svg width="14" height="14" viewBox="0 0 14 14" fill="none" stroke="black">
          <path d="M1 1l12 12M13 1L1 13" />
        </svg>
      </button>
    </StyledDialogTitle>
    <StyledDialogBody>
      <StyledDialogTabs>
        <StyledDialogTab type="button">
          <Keyed text="查找" letter="D" />
        </StyledDialogTab>
        <StyledDialogTab type="button" active="true">
          <Keyed text="替换" letter="P" />
        </StyledDialogTab>
      </StyledDialogTabs>
      <StyledPanel>
        <FindRow id="find" text="查找内容" letter="N" value=" " caret />
        <FindRow id="replace" text="替换为" letter="E" value="," />
        <StyledOptions>
          <div>
            <SelectRow id="scope" text="范围" letter="H" value="工作簿" />
            <SelectRow id="order" text="搜索" letter="S" value="按行" />
            <SelectRow id="lookin" text="查找范围" letter="L" value="公式" />
          </div>
          <StyledCheckList>
            <CheckRow text="区分大小写" letter="C" />
            <CheckRow text="单元格匹配" letter="O" />
            <CheckRow text="区分全/半角" letter="B" checked />
          </StyledCheckList>
          <StyledMore>
            <StyledButton type="button">
              <Keyed text="选项" letter="T" end=" <<" />
            </StyledButton>
          </StyledMore>
        </StyledOptions>
      </StyledPanel>
      <StyledDialogFooter>
        <div>
          <StyledButton type="button" width={104}>
            <Keyed text="全部替换" letter="A" />
          </StyledButton>
          <StyledButton type="button">
            <Keyed text="替换" letter="R" />
          </StyledButton>
        </div>
        <div>
          <StyledButton type="button">
            <Keyed text="查找全部" letter="I" />
          </StyledButton>
          <StyledButton type="button" width={116} primary="true">
            <Keyed text="查找下一个" letter="F" />
          </StyledButton>
        </div>
        <StyledButton type="button">关闭</StyledButton>
      </StyledDialogFooter>
    </StyledDialogBody>
  </StyledDialog>
);

const Notes = () => (
  <StyledNotes>
    <StyledNote $left={609} $top={254}>
      全选单元格内容，按【<span>Ctrl+H</span>】打开“查找和替换”对话框
    </StyledNote>
    <StyledNote $left={1076} $top={403}>
      “查找内容”输入：空格（按一下空格键）
    </StyledNote>
    <StyledNote $left={1379} $top={584}>
      “替换为”输入：<span>Ctrl+J</span>（换行）
    </StyledNote>
    <svg width="1400" height="800" viewBox="0 0 1400 800" fill="#fc3a3a">
      <path d="M781 388L758 449l3 1-12 13-2-19 4 2z" />
      <path d="M892 559L1041 450v-3l19-5-8 17-3-1L893 561z" />
      <path d="M907 623L1360 604l-1-3 19 9-18 8v-4L907 625z" />
      <path d="M822.500 561.500h60v38h-60zM823.500 610.500h68v30h-68z" fill="none" stroke="#fc3a3a" strokeWidth="3" />
    </svg>
  </StyledNotes>
);

const Watermark = () => (
  <StyledWatermark
    width="360"
    height="190"
    viewBox="0 0 360 190"
    fill="white"
    fillOpacity="0.85"
    stroke="#b0b0b0"
    strokeOpacity="0.6"
    strokeWidth="2"
    fontFamily="Liberation Sans"
    fontWeight="700"
  >
    <ellipse cx="135" cy="57" rx="14" ry="17" />
    <ellipse cx="159" cy="33" rx="13" ry="18" />
    <ellipse cx="190" cy="35" rx="14" ry="17" />
    <ellipse cx="209" cy="64" rx="14" ry="17" />
    <text x="3" y="121" fontSize="77">Bai</text>
    <path d="M171 58c-18 0-20 18-33 28-16 13-9 38 12 38 8 0 14-2 21-2s14 3 24 2c20-2 27-22 12-37-14-13-18-29-36-29z" />
    <text x="141" y="113" fontSize="46">du</text>
    <text x="224" y="118" fontSize="58" fontFamily="Noto Sans CJK SC" fontWeight="900">经验</text>
    <text x="7" y="168" fontSize="40" fontFamily="Open Sans" fontWeight="400" strokeOpacity="0.45">jingyan.baidu.com</text>
  </StyledWatermark>
);

const App = () => (
  <>
    <GlobalStyle />
    <StyledApp>
      <TitleBar />
      <StyledTabRow>
        <StyledFileTab type="button">文件</StyledFileTab>
        {tabs.map(t => (
          <StyledTab key={t} type="button" active={t === '数据' ? 'true' : undefined}>
            {t}
          </StyledTab>
        ))}
        <StyledAccount>
          <StyledLogin href="#login">登录</StyledLogin>
          <svg width="30" height="30" viewBox="0 0 30 30">
            <path d="M0 0h30v30H0z" fill="#b2b2b2" />
            <ellipse cx="15" cy="11" rx="6" ry="7.500" fill="white" />
            <path d="M4 30c0-9 3-11 8-12l3 2 3-2c5 1 8 3 8 12z" fill="white" />
          </svg>
        </StyledAccount>
      </StyledTabRow>
      <Ribbon />
      <StyledFormulaBar>
        <StyledNameBox>
          <StyledBareInput serifed="true" aria-label="名称框" defaultValue="F2" />
          <Arrow size={8} />
        </StyledNameBox>
        <StyledGrip>
          <svg width="2" height="12" viewBox="0 0 2 12">
            <path d="M0 0h2v2H0zM0 5h2v2H0zM0 10h2v2H0z" fill="#aaa" />
          </svg>
        </StyledGrip>
        <StyledFormulaTools>
          <button type="button" aria-label="取消">
            <svg width="16" height="14" viewBox="0 0 16 14" fill="none" stroke="#c0c0c0" strokeWidth="2">
              <path d="M1 1l14 12M15 1L1 13" />
            </svg>
          </button>
          <button type="button" aria-label="输入">
            <svg width="18" height="14" viewBox="0 0 18 14" fill="none" stroke="#c0c0c0" strokeWidth="3">
              <path d="M1 7l5 5L17 1" />
            </svg>
          </button>
          <button type="button" aria-label="插入函数">
            <svg width="17" height="20" viewBox="0 0 17 20" fill="#666" fontFamily="Liberation Serif" fontStyle="italic">
              <text x="2" y="15" fontSize="20" fontWeight="700">f</text>
              <text x="9" y="16" fontSize="14" fontWeight="700">x</text>
            </svg>
          </button>
        </StyledFormulaTools>
        <StyledFormulaInput>
          <StyledBareInput serifed="true" aria-label="编辑栏" defaultValue={'大葱\u2002油麦菜\u2002芹菜'} />
          <svg width="10" height="7" viewBox="0 0 10 7" fill="none" stroke="#666" strokeWidth="2">
            <path d="M1 1l4 4 4-4" />
          </svg>
        </StyledFormulaInput>
      </StyledFormulaBar>
      <StyledWorkspace>
        <Sheet />
        <StyledVerticalScroll>
          <StyledScrollButton type="button" aria-label="向上">
            <svg width="9" height="5" viewBox="0 0 9 5">
              <path d="M0 5h9L4.500 0z" fill="#666" />
            </svg>
          </StyledScrollButton>
          <StyledVerticalThumb />
          <StyledSpace grow={143} />
          <StyledScrollButton type="button" aria-label="向下">
            <Arrow size={9} />
          </StyledScrollButton>
        </StyledVerticalScroll>
      </StyledWorkspace>
      <StyledSheetBar>
        <StyledSheetArrows>
          <svg width="5" height="10" viewBox="0 0 5 10"><path d="M5 0v10L0 5z" fill="#c0c0c0" /></svg>
          <svg width="5" height="10" viewBox="0 0 5 10"><path d="M0 0v10l5-5z" fill="#c0c0c0" /></svg>
        </StyledSheetArrows>
        <StyledSheetTab type="button">Sheet1</StyledSheetTab>
        <StyledAddSheet type="button" aria-label="新工作表">
          <svg width="21" height="21" viewBox="0 0 21 21" fill="none" stroke="#777">
            <circle cx="10.500" cy="10.500" r="9.500" />
            <path d="M5.500 10.500h10M10.500 5.500v10" strokeWidth="2" />
          </svg>
        </StyledAddSheet>
        <StyledHorizontalScroll>
          <svg width="17" height="10" viewBox="0 0 17 10">
            <path d="M0 0h2v2H0zM0 4h2v2H0zM0 8h2v2H0z" fill="#aaa" />
          </svg>
          <StyledScrollButton type="button" aria-label="向左">
            <svg width="5" height="9" viewBox="0 0 5 9"><path d="M5 0v9L0 4.500z" fill="#666" /></svg>
          </StyledScrollButton>
          <StyledTrack>
            <StyledHorizontalThumb />
          </StyledTrack>
          <StyledScrollButton type="button" aria-label="向右">
            <svg width="5" height="9" viewBox="0 0 5 9"><path d="M0 0v9l5-4.500z" fill="#666" /></svg>
          </StyledScrollButton>
        </StyledHorizontalScroll>
      </StyledSheetBar>
      <StyledStatusBar>
        <StyledStatusText>就绪</StyledStatusText>
        <StyledStatusIcon>
          <svg width="15" height="15" viewBox="0 0 15 15">
            <path d="M1.500 4v10.500h13V4" fill="none" stroke="white" />
            <path d="M4 8.500h9M4 11.500h9" fill="none" stroke="white" strokeDasharray="2 1" />
            <path d="M7 1h8v4H7z" fill="white" />
            <circle cx="3.500" cy="3.500" r="3.500" fill="white" />
          </svg>
        </StyledStatusIcon>
        <StyledViewButton type="button" active="true" aria-label="普通">
          <svg width="14" height="14" viewBox="0 0 14 14" fill="none" stroke="white">
            <path d="M.5.5h12v12H.5zM4.500 0v13M8.500 0v13M0 4.500h13M0 8.500h13" />
          </svg>
        </StyledViewButton>
        <StyledViewButton type="button" aria-label="页面布局">
          <svg width="14" height="14" viewBox="0 0 14 14" fill="none" stroke="white">
            <path d="M.5.500h13v12H.5zM3.500 2.500h7v8h-7zM5 4.500h4M5 6.500h4M5 8.500h4" />
          </svg>
        </StyledViewButton>
        <StyledViewButton type="button" aria-label="分页预览">
          <svg width="14" height="14" viewBox="0 0 14 14">
            <path d="M.5.500h13v12H.5z" fill="none" stroke="white" />
            <path d="M1 1h3v7H1zM5 1h4v7H5z" fill="white" />
          </svg>
        </StyledViewButton>
        <svg width="14" height="13" viewBox="0 0 14 13">
          <path d="M5 5h9v2H5z" fill="white" />
        </svg>
        <StyledZoomRange type="range" aria-label="缩放" min="10" max="194" defaultValue="106" />
        <svg width="12" height="12" viewBox="0 0 12 12">
          <path d="M0 5h12v2H0zM5 0h2v12H5z" fill="white" />
        </svg>
        <StyledZoomValue>110%</StyledZoomValue>
      </StyledStatusBar>
      <StyledTaskbar>
        <StyledTaskSearch>
          <svg width="28" height="8" viewBox="0 0 28 8">
            <path d="M0 7L18 1q6-2 7 7H0z" fill="#cfc0a5" />
          </svg>
        </StyledTaskSearch>
        <StyledClock>21:12</StyledClock>
      </StyledTaskbar>
      <FindDialog />
      <Notes />
      <Watermark />
    </StyledApp>
  </>
);

export default App;
